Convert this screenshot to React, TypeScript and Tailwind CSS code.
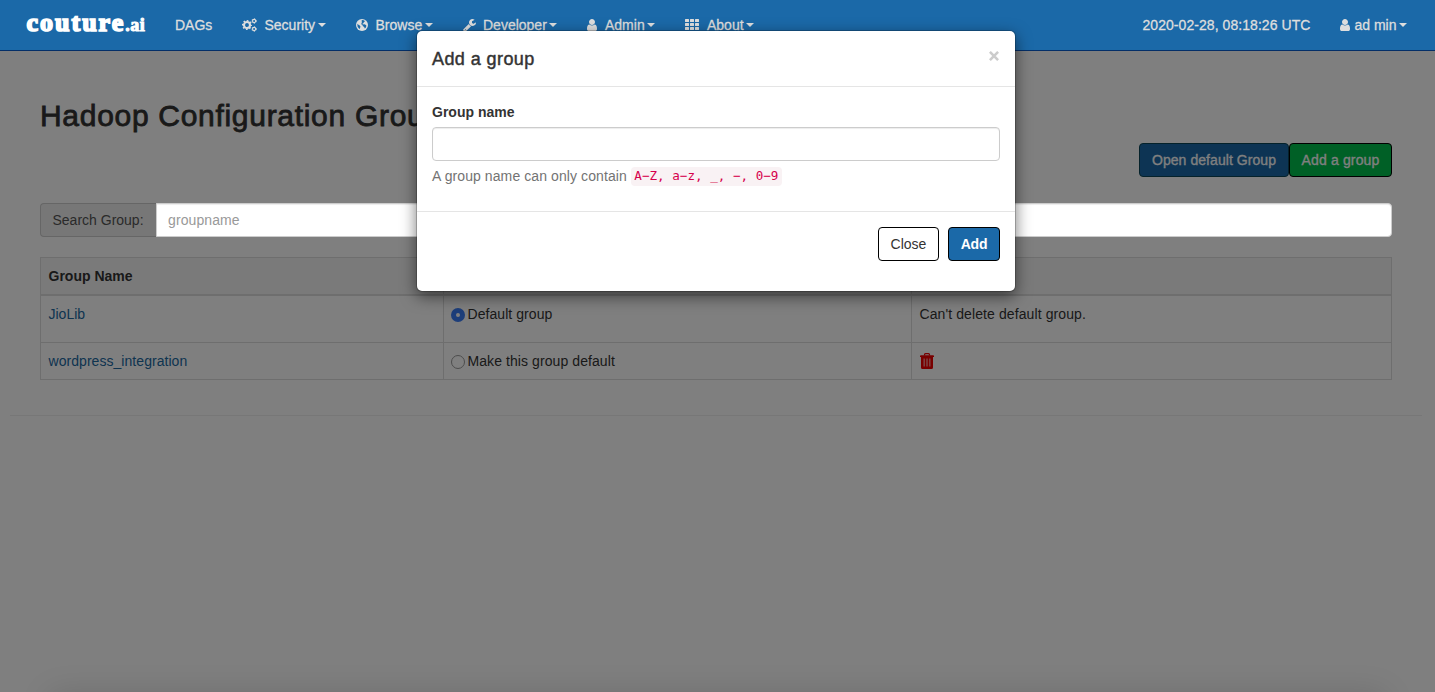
import React from "react";

type IconProps = { className?: string };

const FONT = "font-['Liberation_Sans',Arial,sans-serif]";

function CogsIcon({ className }: IconProps) {
  return (
    <svg viewBox="0 0 15 14" className={className} fill="none" stroke="currentColor">
      <circle cx="5" cy="7" r="3" strokeWidth="2.1" />
      <circle cx="5" cy="7" r="4.4" strokeWidth="1.3" strokeDasharray="1.73 1.73" strokeDashoffset="0.86" />
      <circle cx="12.1" cy="3" r="1.6" strokeWidth="1.1" />
      <circle cx="12.1" cy="3" r="2.3" strokeWidth="0.8" strokeDasharray="1.2 1.2" />
      <circle cx="12.1" cy="11" r="1.6" strokeWidth="1.1" />
      <circle cx="12.1" cy="11" r="2.3" strokeWidth="0.8" strokeDasharray="1.2 1.2" />
    </svg>
  );
}

function GlobeIcon({ className }: IconProps) {
  return (
    <svg viewBox="0 0 12 12" className={className}>
      <circle cx="6" cy="6" r="6" fill="currentColor" />
      <path
        fill="#1b69a8"
        d="M5.6 1.3 7 1.100 8.500 1.700 8.900 2.500 8 3 7.300 4.200 6.400 4.700 6.700 5.500 8.500 5.300 9.900 6.100 10.400 6.700 9.900 8.400 8.800 9.500 8.300 8.300 7.400 7.600 6.700 6.500 5.700 5.800 5.300 4.500 5.900 3.300Z M1.300 4.800 2.500 5.700 3.800 6.600 4.500 7.800 4 9 4 10.100 2.700 9.300 1.600 7.700Z"
      />
    </svg>
  );
}

function WrenchIcon({ className }: IconProps) {
  return (
    <svg viewBox="64 128 1664 1664" className={className} fill="currentColor">
      <path d="M448 1472q0-26-19-45t-45-19-45 19-19 45 19 45 45 19 45-19 19-45zm644-420l-682 682q-37 37-90 37-52 0-91-37l-106-108q-38-36-38-90 0-53 38-91l681-681q39 98 114.500 173.500t173.500 114.500zm634-435q0 39-23 106-47 134-164.500 217.500t-258.500 83.500q-185 0-316.500-131.500t-131.500-316.500 131.500-316.500 316.500-131.500q58 0 121.500 16.500t107.500 46.500q16 11 16 28t-16 28l-293 169v224l193 107q5-3 79-48.500t135.500-81 70.500-35.500q15 0 23.500 10t8.500 25z" />
    </svg>
  );
}

function UserIcon({ className }: IconProps) {
  return (
    <svg viewBox="0 128 1280 1536" className={className} fill="currentColor">
      <path d="M1280 1399q0 109-62.500 187t-150.500 78h-854q-88 0-150.500-78t-62.500-187q0-85 8.500-160.500t31.500-152 58.500-131 94-89 134.500-34.500q131 128 313 128t313-128q76 0 134.500 34.500t94 89 58.500 131 31.500 152 8.500 160.500zm-256-887q0 159-112.500 271.500t-271.500 112.500-271.500-112.500-112.500-271.500 112.500-271.500 271.500-112.500 271.500 112.500 112.500 271.500z" />
    </svg>
  );
}

function GridIcon({ className }: IconProps) {
  return (
    <svg viewBox="0 0 14 12" className={className} fill="currentColor">
      {[0, 5, 10].map((x) =>
        [0, 4, 8].map((y) => <rect key={`${x}-${y}`} x={x} y={y} width="4" height="3" rx="0.5" />)
      )}
    </svg>
  );
}

function TrashIcon({ className }: IconProps) {
  return (
    <svg viewBox="0 0 14 16" className={className}>
      <path d="M4.500 2.600V1.700Q4.500.7 5.500.7H8.500Q9.500.7 9.500 1.700V2.600" fill="none" stroke="currentColor" strokeWidth="1.300" />
      <path d="M1 2.300H13Q14 2.300 14 3.100V4H0V3.100Q0 2.300 1 2.300Z" fill="currentColor" />
      <path
        fillRule="evenodd"
        fill="currentColor"
        d="M1 4H13V14.500Q13 16 11.500 16H2.500Q1 16 1 14.500ZM3.700 5.500V13.500H4.500V5.500ZM6.600 5.500V13.500H7.400V5.500ZM9.500 5.500V13.500H10.300V5.500Z"
      />
    </svg>
  );
}

function Caret() {
  return <span className="ml-[2.500px] h-0 w-0 border-x-4 border-t-4 border-x-transparent border-t-current" />;
}

type NavItem = { label: string; width: string; textWidth: string; icon: React.ReactNode };

const NAV: NavItem[] = [
  { label: "Security", width: "w-[114px]", textWidth: "w-[22.5px]", icon: <CogsIcon className="h-[14px] w-[15px]" /> },
  { label: "Browse", width: "w-[107px]", textWidth: "w-[19.5px]", icon: <GlobeIcon className="size-3" /> },
  { label: "Developer", width: "w-[124px]", textWidth: "w-5", icon: <WrenchIcon className="size-[13px]" /> },
  { label: "Admin", width: "w-[98px]", textWidth: "w-[18px]", icon: <UserIcon className="h-3 w-[10px]" /> },
  { label: "About", width: "w-[98px]", textWidth: "w-[22px]", icon: <GridIcon className="h-3 w-[14px]" /> },
];

function Navbar() {
  return (
    <nav className="relative z-20 flex h-[51px] items-center border-b border-[#042f68] bg-[#1b69a8] text-sm text-[#dedede] [-webkit-text-stroke:0.3px]">
      <a className="ml-[26.5px] w-[148.500px] whitespace-nowrap pb-[4px] font-['Liberation_Serif',serif] text-[26px] font-bold leading-none tracking-[2px] text-white [-webkit-text-stroke:1.700px]">
        couture<span className="text-[18px] tracking-[0.5px] [-webkit-text-stroke:1px]">.ai</span>
      </a>
      <a className="w-[67px]">DAGs</a>
      {NAV.map((n) => (
        <a key={n.label} className={`flex items-center ${n.width}`}>
          <span className={`flex shrink-0 ${n.textWidth}`}>{n.icon}</span>
          {n.label}
          <Caret />
        </a>
      ))}
      <span className="ml-auto mr-[30px] tracking-[0.06px]">2020-02-28, 08:18:26 UTC</span>
      <a className="mr-7 flex items-center">
        <UserIcon className="mr-1 h-3 w-[10px]" />
        ad min
        <Caret />
      </a>
    </nav>
  );
}

function GroupTable() {
  const cell = "border border-[#ddd] pl-[7.500px] pr-2 pt-2 text-left align-top leading-5";
  return (
    <table className="mt-5 w-full table-fixed border-collapse border border-[#ddd]">
      <colgroup>
        <col className="w-[403px]" />
        <col className="w-[468px]" />
        <col />
      </colgroup>
      <thead>
        <tr className="h-[37px] bg-[#f5f5f5]">
          <th className={`${cell} border-b-2`}>Group Name</th>
          <th className={`${cell} border-b-2`} />
          <th className={`${cell} border-b-2`} />
        </tr>
      </thead>
      <tbody>
        <tr className="h-12">
          <td className={`${cell} text-[#20689f]`}>JioLib</td>
          <td className={cell}>
            <label className="flex items-center tracking-[0.06px]">
              <span className="-ml-[0.500px] mr-[2.500px] mt-0.5 flex size-[14px] items-center justify-center rounded-full bg-[#3b7cf4]">
                <span className="size-1 rounded-full bg-white" />
              </span>
              Default group
            </label>
          </td>
          <td className={`${cell} tracking-[0.1px]`}>Can't delete default group.</td>
        </tr>
        <tr className="h-[37px]">
          <td className={`${cell} tracking-[0.05px] text-[#20689f]`}>wordpress_integration</td>
          <td className={cell}>
            <label className="flex items-center tracking-[0.08px]">
              <span className="-ml-[0.500px] mr-[2.500px] mt-0.5 size-[14px] rounded-full border border-[#999]" />
              Make this group default
            </label>
          </td>
          <td className={cell}>
            <TrashIcon className="mt-[2px] h-4 w-[14px] text-[#f00000]" />
          </td>
        </tr>
      </tbody>
    </table>
  );
}

function AddGroupModal() {
  return (
    <div role="dialog" className="absolute left-[416px] top-[30px] z-30 h-[262px] w-[600px] rounded-md border border-black/20 bg-white bg-clip-padding text-[#333] shadow-[0_5px_15px_rgba(0,0,0,0.5)]">
      <div className="flex h-14 items-center justify-between border-b border-[#e5e5e5] px-[15px]">
        <h4 className="text-lg leading-none tracking-[0.42px] [-webkit-text-stroke:0.45px]">Add a group</h4>
        <svg viewBox="0 0 10 10" className="mb-1.5 mr-px size-[10px]" stroke="#ccc" strokeWidth="2.600">
          <path d="M.9.900 9.100 9.100M9.100.900.900 9.100" />
        </svg>
      </div>
      <div className="h-[125px] border-b border-[#e5e5e5] px-[15px] pt-[15px]">
        <label className="block font-bold leading-5">Group name</label>
        <input className="mt-[5px] block h-[34px] w-full rounded border border-[#ccc] bg-white px-3 shadow-[inset_0_1px_1px_rgba(0,0,0,0.075)] outline-none" />
        <p className="mt-[5px] flex h-5 items-center text-[#737373]">
          <span className="tracking-[0.09px]">A group name can only contain</span>
          <code className="ml-1 flex h-[19px] items-center rounded bg-[#f9f2f4] px-[3.500px] font-['DejaVu_Sans_Mono',monospace] text-[12.600px] text-[#d6004c]">
            A−Z, a−z, _, −, 0−9
          </code>
        </p>
      </div>
      <div className="flex justify-end gap-[9px] px-[15px] pt-[15px]">
        <button className="h-[34px] w-[61px] rounded border border-black bg-white">Close</button>
        <button className="h-[34px] w-[52px] rounded border border-black bg-[#1b69a8] font-bold tracking-[-0.2px] text-white">Add</button>
      </div>
    </div>
  );
}

export default function App() {
  return (
    <div className={`relative h-[692px] overflow-hidden bg-white text-sm text-[#333] ${FONT}`}>
      <Navbar />
      <main className="pl-10 pr-[43px] pt-12">
        <h2 className="whitespace-nowrap text-[30px] leading-[33px] tracking-[0.700px] [-webkit-text-stroke:0.8px]">
          Hadoop Configuration Groups
        </h2>
        <div className="mt-[11px] flex justify-end text-white">
          <button className="h-[34px] w-[150px] rounded border border-[#0b4556] bg-[#1b69a8] tracking-[0.06px] [-webkit-text-stroke:0.3px]">
            Open default Group
          </button>
          <button className="h-[34px] w-[103px] rounded border border-black bg-[#00c04d] tracking-[0.15px] [-webkit-text-stroke:0.3px]">
            Add a group
          </button>
        </div>
        <div className="mt-[26px] flex h-[34px]">
          <span className="flex w-[116px] items-center rounded-l border border-r-0 border-[#ccc] bg-[#eee] pl-[11.500px] text-[#555]">
            Search Group:
          </span>
          <input
            placeholder="groupname"
            className="relative z-20 min-w-0 flex-1 rounded-r border border-[#ccc] bg-white px-[11px] tracking-[0.1px] shadow-[inset_0_1px_1px_rgba(0,0,0,0.075)] outline-none placeholder:text-[#999]"
          />
        </div>
        <GroupTable />
      </main>
      <hr className="ml-[10px] mr-[13px] mt-[35px] border-[#eee]" />
      <div className="absolute inset-0 z-10 bg-black/50" />
      <div className="absolute inset-x-[58px] top-[702px] z-10 h-5 shadow-[0_0_32px_8px_rgba(0,0,0,0.14)]" />
      <AddGroupModal />
    </div>
  );
}
